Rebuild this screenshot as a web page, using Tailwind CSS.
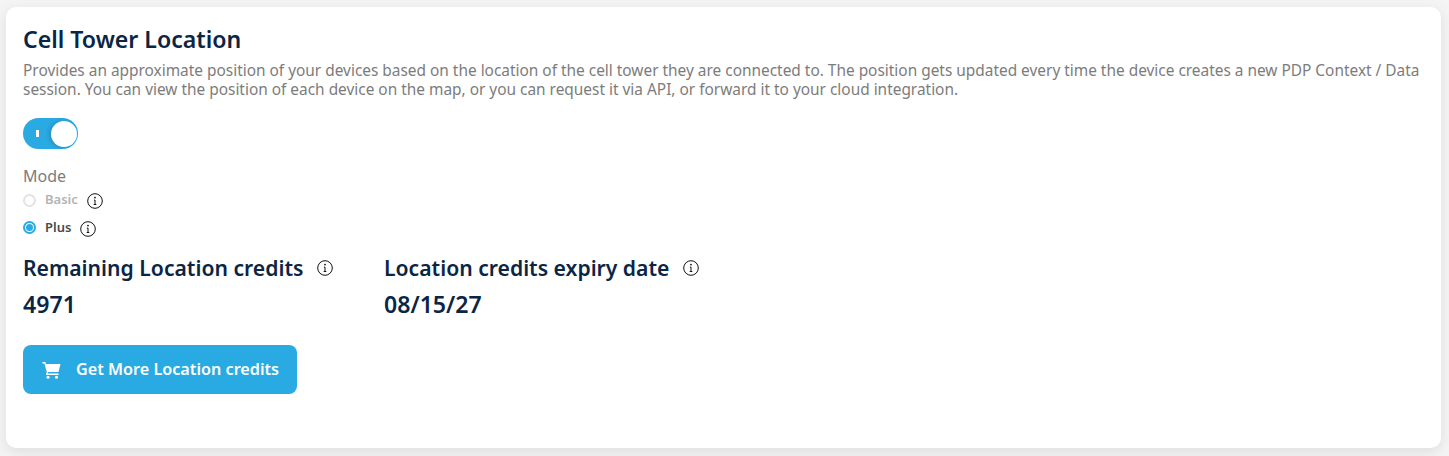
<!DOCTYPE html>
<html lang="en">
  <head>
    <meta charset="UTF-8" />
    <title>Cell Tower Location</title>
    <script src="https://cdn.jsdelivr.net/npm/@tailwindcss/browser@4"></script>
  </head>
  <body class="h-[456px] w-[1449px] overflow-hidden bg-[#f4f4f4] font-['Noto_Sans',sans-serif]">
    <div class="pt-[7px] pl-[6px] pr-2">
      <!-- Card -->
      <div class="h-[441px] w-[1435px] rounded-[10px] bg-white pt-[17px] pl-[17px] pr-[14px] shadow-[0_4px_14px_rgba(0,0,0,0.09)]">
        <h2 class="text-[23.1px] leading-[30px] font-semibold text-[#0b2545]">Cell Tower Location</h2>
        <p class="mt-[7px] text-[15.41px] leading-[19px] text-[#7c7c7c]">
          Provides an approximate position of your devices based on the location of the cell tower they are connected to. The position gets updated every time the device creates a new PDP Context / Data session. You can view the position of each device on the map, or you can request it via API, or forward it to your cloud integration.
        </p>

        <!-- Toggle -->
        <div class="mt-[19px] flex h-[31px] w-[55px] items-center justify-between rounded-full bg-[#2aaae2] pr-[1px] pl-[13px]">
          <span class="h-[7px] w-[3px] bg-white"></span>
          <span class="h-[26px] w-[26px] rounded-full bg-white shadow-[-2px_0_4px_rgba(0,0,0,0.16)]"></span>
        </div>

        <!-- Mode -->
        <div class="mt-[17px] text-[16px] leading-[20px] text-[#7c7c7c]">Mode</div>
        <div class="mt-[4px] flex h-[20px] items-center">
          <span class="h-[13px] w-[13px] rounded-full border-2 border-[#e3e3e3] bg-white"></span>
          <span class="ml-[9px] text-[13px] font-semibold text-[#b4b4b4]">Basic</span>
          <svg class="mt-[2px] ml-[9px]" width="16" height="16" viewBox="0 0 16 16" fill="none" stroke="#111" stroke-width="1"><circle cx="8" cy="8" r="7.3" /><path d="M8 7v4.4M6.9 7.1H8M6.7 11.5h2.6" /><circle cx="8" cy="4.6" r="0.9" fill="#111" stroke="none" /></svg>
        </div>
        <div class="mt-[7px] flex h-[20px] items-center">
          <span class="flex h-[13px] w-[13px] items-center justify-center rounded-full border-2 border-[#2aaae2] bg-white"><span class="h-[7px] w-[7px] rounded-full bg-[#2aaae2]"></span></span>
          <span class="mt-[2px] ml-[9px] text-[13px] font-semibold text-[#4a4a4a]">Plus</span>
          <svg class="mt-[4px] ml-[9px]" width="16" height="16" viewBox="0 0 16 16" fill="none" stroke="#111" stroke-width="1"><circle cx="8" cy="8" r="7.3" /><path d="M8 7v4.4M6.9 7.1H8M6.7 11.5h2.6" /><circle cx="8" cy="4.6" r="0.9" fill="#111" stroke="none" /></svg>
        </div>

        <!-- Credits -->
        <div class="mt-[16px] flex text-[#0b2545]">
          <div class="w-[361px]">
            <div class="flex items-center text-[21.15px] leading-[30px] font-semibold">
              Remaining Location credits
              <svg class="ml-[14px]" width="16" height="16" viewBox="0 0 16 16" fill="none" stroke="#111" stroke-width="1"><circle cx="8" cy="8" r="7.3" /><path d="M8 7v4.4M6.9 7.1H8M6.7 11.5h2.6" /><circle cx="8" cy="4.6" r="0.9" fill="#111" stroke="none" /></svg>
            </div>
            <div class="mt-[6px] text-[23.1px] leading-[30px] font-semibold">4971</div>
          </div>
          <div>
            <div class="flex items-center text-[21.15px] leading-[30px] font-semibold">
              Location credits expiry date
              <svg class="ml-[14px]" width="16" height="16" viewBox="0 0 16 16" fill="none" stroke="#111" stroke-width="1"><circle cx="8" cy="8" r="7.3" /><path d="M8 7v4.4M6.9 7.1H8M6.7 11.5h2.6" /><circle cx="8" cy="4.6" r="0.9" fill="#111" stroke="none" /></svg>
            </div>
            <div class="mt-[6px] text-[23.1px] leading-[30px] font-semibold">08/15/27</div>
          </div>
        </div>

        <!-- Button -->
        <button class="mt-[26px] flex h-[49px] w-[274px] items-center rounded-[8px] bg-[#2aaae2] pl-[19px] text-[16.2px] font-semibold text-white">
          <svg width="19" height="18" viewBox="0 0 19 18" fill="#fff"><path d="M0.5 1h2.8l.7 2H18.5l-2 8H6l-.5 1.6H16.5V14H3.8l1-3L2.4 2.4H.5z" /><circle cx="6" cy="16.2" r="1.5" /><circle cx="14.5" cy="16.2" r="1.5" /></svg>
          <span class="ml-[15px]">Get More Location credits</span>
        </button>
      </div>
    </div>
  </body>
</html>
